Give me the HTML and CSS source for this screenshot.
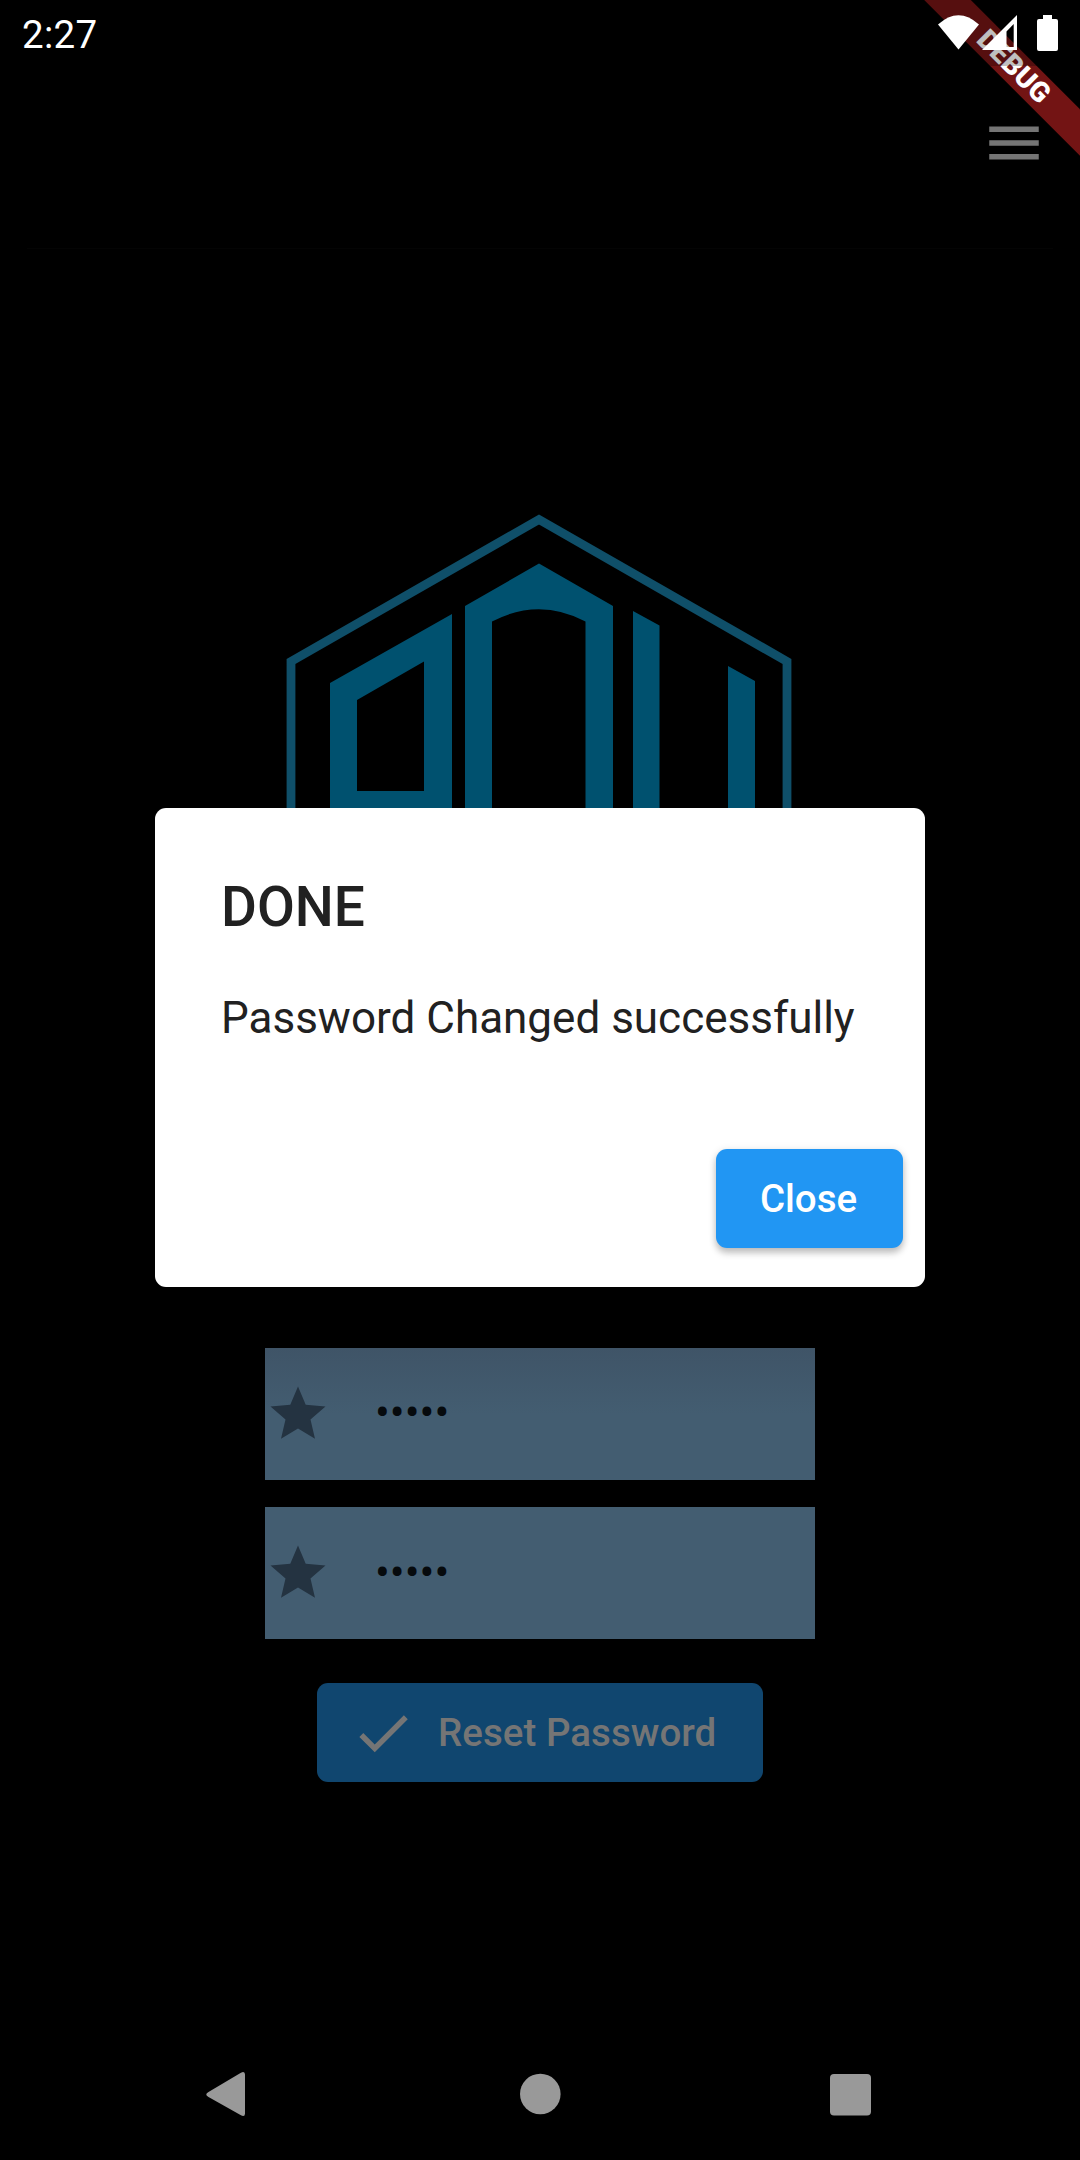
FILE: index.html
```html
<!DOCTYPE html>
<html lang="en">
<head>
<meta charset="utf-8">
<title>Reset Password</title>
<link rel="stylesheet" href="styles.css">
</head>
<body>
<div class="screen">
  <header class="app-bar">
    <svg class="menu-icon" viewBox="0 0 24 24"><path d="M3 18h18v-2H3v2zm0-5h18v-2H3v2zm0-7v2h18V6H3z"/></svg>
  </header>
  <hr class="divider">
  <main class="content">
    <svg class="logo" viewBox="280 508 518 400">
      <path class="logo-frame" d="M291 908V661.5L539 519.5L787 661.5V908"/>
      <path class="logo-mark" fill-rule="evenodd" d="M330 683L452 614V908H330ZM357 700L424 661.5V791H357Z"/>
      <path class="logo-mark" d="M465 606L539 563.5L613 606V908H585.500V621.500Q539 597 492 621.500V908H465Z"/>
      <path class="logo-mark" d="M633 611L659.500 625.500V908H633ZM728 666L755 681V908H728Z"/>
    </svg>
    <form class="form">
      <div class="field field-shaded">
        <svg class="icon" viewBox="0 0 24 24"><path d="M12 17.270L18.180 21l-1.640-7.030L22 9.240l-7.190-.610L12 2 9.190 8.630 2 9.240l5.460 4.730L5.820 21z"/></svg>
        <span class="secret">•••••</span>
      </div>
      <div class="field">
        <svg class="icon" viewBox="0 0 24 24"><path d="M12 17.270L18.180 21l-1.640-7.030L22 9.240l-7.190-.610L12 2 9.190 8.630 2 9.240l5.460 4.730L5.820 21z"/></svg>
        <span class="secret">•••••</span>
      </div>
      <button class="reset" type="button">
        <svg class="icon" viewBox="0 0 24 24"><path d="M9 16.170L4.830 12l-1.420 1.410L9 19 21 7l-1.410-1.410z"/></svg>
        <span class="reset-label">Reset Password</span>
      </button>
    </form>
  </main>
  <nav class="nav-bar">
    <svg class="nav-icon" viewBox="0 0 48 48"><path d="M6.500 22L38.500 2.900Q43 .5 43 4.500V43.500Q43 47.500 38.500 45.100L6.500 27Q2 24.500 6.500 22Z"/></svg>
    <svg class="nav-icon" viewBox="0 0 48 48"><circle cx="25.300" cy="24" r="20.300"/></svg>
    <svg class="nav-icon" viewBox="0 0 48 48"><rect x="3" y="4" width="41" height="41.500" rx="4"/></svg>
  </nav>

  <div class="overlay">
    <section class="dialog">
      <h1 class="dialog-title">DONE</h1>
      <p class="dialog-text">Password Changed successfully</p>
      <div class="dialog-actions"><button class="close" type="button">Close</button></div>
    </section>
  </div>

  <div class="debug-banner"><span>DEBUG</span></div>

  <div class="status-bar">
    <span class="clock">2:27</span>
    <svg class="status-icons" viewBox="0 0 122 36">
      <path d="M0 9.500Q20.500-9 41 9.500L20.500 34.500Z"/>
      <path fill-rule="evenodd" d="M79 0V35H44ZM75.700 9L68.500 16.500V32H75.700Z"/>
      <path d="M105 0H114V4H118Q120 4 120 6V34Q120 36 118 36H101Q99 36 99 34V6Q99 4 101 4H105Z"/>
    </svg>
  </div>
</div>
</body>
</html>
```
FILE: styles.css
```css
* { box-sizing: border-box; }

body {
  margin: 0;
  background: #000;
  font-family: Roboto, "Liberation Sans", sans-serif;
}

button {
  border: 0;
  font: 500 38.5px/1 Roboto, "Liberation Sans", sans-serif;
}

.screen {
  position: relative;
  display: flex;
  flex-direction: column;
  width: 1080px;
  height: 2160px;
  overflow: hidden;
}

.app-bar {
  display: flex;
  justify-content: flex-end;
  height: 248px;
  padding: 110px 33px 0 0;
}

.menu-icon { width: 66px; height: 66px; fill: #757575; }

.divider {
  width: 1026px;
  height: 1px;
  margin: 0 auto 1px;
  border: 0;
  background: #040404;
}

.content {
  display: flex;
  flex: 1;
  flex-direction: column;
  align-items: center;
  padding-top: 258px;
}

.logo { width: 518px; height: 400px; margin-right: 2px; }
.logo-frame { fill: none; stroke: #0f4f69; stroke-width: 8.8; }
.logo-mark { fill: #00516f; }

.form {
  display: flex;
  flex-direction: column;
  align-items: center;
  gap: 27.5px;
  margin-top: 439.5px;
}

.icon { flex: none; width: 66px; height: 66px; }

.field {
  display: flex;
  align-items: center;
  gap: 44px;
  width: 550px;
  height: 132px;
  background: #435d71;
}

.field-shaded { background: linear-gradient(#3f5467, #435d71 50%); }
.field .icon { fill: #243341; }
.secret { color: #060a0d; font-size: 44px; line-height: 52px; margin-top: -1px; }

.reset {
  display: flex;
  align-items: center;
  gap: 22px;
  width: 446px;
  height: 99px;
  margin-top: 16.5px;
  padding: 0 0 0 33px;
  border-radius: 11px;
  background: #10466f;
  color: #757575;
  white-space: nowrap;
}

.reset .icon { fill: #757575; }
.reset-label { padding-top: 2px; letter-spacing: .04px; }

.nav-bar {
  display: flex;
  justify-content: space-between;
  align-items: center;
  height: 132px;
  padding: 0 205px 0 202px;
}

.nav-icon { width: 48px; height: 48px; fill: #999; }

.overlay {
  position: absolute;
  inset: 0;
  display: flex;
  justify-content: center;
  align-items: flex-start;
  padding-top: 807.5px;
}

.dialog {
  display: flex;
  flex-direction: column;
  width: 770px;
  height: 479px;
  padding: 67px 22px 38.5px 66px;
  border-radius: 11px;
  background: #fff;
  color: #212121;
}

.dialog-title { margin: 0; font-size: 55px; font-weight: 500; line-height: 64px; }
.dialog-text { margin: 53px 0 0; font-size: 44px; line-height: 52px; white-space: nowrap; }

.dialog-actions {
  display: flex;
  justify-content: flex-end;
  margin-top: auto;
}

.close {
  width: 187px;
  height: 99px;
  padding: 1px 2px 0 0;
  border-radius: 11px;
  background: #2196f3;
  color: #fff;
  box-shadow: 0 5px 7px rgba(0, 0, 0, .22), 0 1px 8px rgba(0, 0, 0, .1);
}

.debug-banner {
  position: absolute;
  left: 864px;
  top: 49.5px;
  display: flex;
  justify-content: center;
  align-items: center;
  width: 300px;
  height: 33px;
  background: #731414;
  color: #fff;
  font-size: 28.05px;
  font-weight: 900;
  letter-spacing: .2px;
  line-height: 33px;
  transform: rotate(45deg);
}

.status-bar {
  position: absolute;
  inset: 0 0 auto;
  display: flex;
  justify-content: space-between;
  height: 66px;
  padding: 15px 20px 0 22px;
  background: rgba(0, 0, 0, .25);
}

.clock { color: #fff; font-size: 38.5px; letter-spacing: .3px; line-height: 40px; }
.status-icons { width: 122px; height: 36px; fill: #fff; }
```
